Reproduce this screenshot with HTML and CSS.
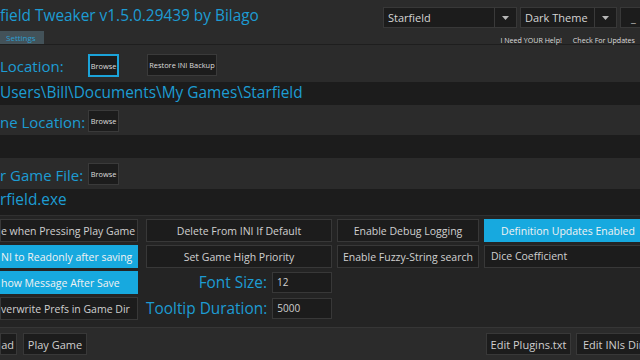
FILE: index.html
```html
<!DOCTYPE html>
<html lang="en">
<head>
  <meta charset="UTF-8" />
  <title>Starfield Tweaker</title>
  <link rel="stylesheet" href="styles.css">
</head>
<body>

<div class="window">
  <header class="topbar">
    <div class="title-area">
      <h1 class="title">field Tweaker v1.5.0.29439 by Bilago</h1>
      <div class="tabs"><span class="tab active">Settings</span></div>
    </div>
    <div class="top-right">
      <div class="combos">
        <div class="combo combo-game">
          <span class="value">Starfield</span>
          <span class="drop"><svg width="7" height="4" viewBox="0 0 7 4"><path d="M0 0h7L3.5 4z" fill="#b8b8b8"/></svg></span>
        </div>
        <div class="combo combo-theme">
          <span class="value">Dark Theme</span>
          <span class="drop"><svg width="7" height="4" viewBox="0 0 7 4"><path d="M0 0h7L3.5 4z" fill="#b8b8b8"/></svg></span>
        </div>
        <button class="min-btn">_</button>
      </div>
      <div class="links">
        <span>I Need YOUR Help!</span>
        <span>Check For Updates</span>
      </div>
    </div>
  </header>

  <div class="field-row row-ini">
    <span class="label">Location:</span>
    <button class="btn btn-browse focused">Browse</button>
    <button class="btn btn-restore">Restore INI Backup</button>
  </div>
  <div class="path path-ini">Users\Bill\Documents\My Games\Starfield</div>

  <div class="field-row row-game">
    <span class="label">ne Location:</span>
    <button class="btn btn-browse">Browse</button>
  </div>
  <div class="path path-game"></div>

  <div class="field-row row-exe">
    <span class="label">r Game File:</span>
    <button class="btn btn-browse">Browse</button>
  </div>
  <div class="path path-exe">rfield.exe</div>

  <div class="options">
    <button class="opt c1 cut">e when Pressing Play Game</button>
    <button class="opt">Delete From INI If Default</button>
    <button class="opt">Enable Debug Logging</button>
    <button class="opt on">Definition Updates Enabled</button>

    <button class="opt c1 cut on">NI to Readonly after saving</button>
    <button class="opt">Set Game High Priority</button>
    <button class="opt">Enable Fuzzy-String search</button>
    <div class="select">Dice Coefficient</div>

    <button class="opt c1 cut on">how Message After Save</button>
    <div class="setting">
      <span class="setting-label">Font Size:</span>
      <div class="input">12</div>
    </div>
    <div></div>
    <div></div>

    <button class="opt c1 cut">verwrite Prefs in Game Dir</button>
    <div class="setting">
      <span class="setting-label">Tooltip Duration:</span>
      <div class="input">5000</div>
    </div>
  </div>

  <footer class="bottombar">
    <div class="group">
      <button class="btn-bottom btn-load">ad</button>
      <button class="btn-bottom btn-play">Play Game</button>
    </div>
    <div class="group">
      <button class="btn-bottom btn-plugins">Edit Plugins.txt</button>
      <button class="btn-bottom btn-inis">Edit INIs Dir</button>
    </div>
  </footer>
</div>

</body>
</html>
```

FILE: styles.css
```css
* {
  box-sizing: border-box;
}

body {
  margin: 0;
  background: #2b2b2b;
  font-family: "Open Sans", "Noto Sans", Arial, sans-serif;
  overflow: hidden;
}

button {
  font-family: inherit;
  cursor: pointer;
}

.window {
  width: 652px;
  height: 360px;
  display: flex;
  flex-direction: column;
}

/* header */
.topbar {
  height: 45px;
  flex-shrink: 0;
  display: flex;
  justify-content: space-between;
  border-bottom: 1px solid #1e1e1e;
}

.title-area {
  display: flex;
  flex-direction: column;
  justify-content: space-between;
}

.title {
  margin: 0;
  padding-top: 6px;
  font-size: 15.4px;
  font-weight: normal;
  line-height: 20px;
  color: #1d9cd3;
  white-space: nowrap;
}

.tabs {
  display: flex;
}

.tab {
  width: 44px;
  height: 13px;
  line-height: 13px;
  padding-left: 6px;
  font-size: 8px;
  color: #2d9fd0;
  background: #435259;
}

.top-right {
  padding-top: 7px;
  display: flex;
  flex-direction: column;
  align-items: flex-end;
}

.combos {
  display: flex;
  gap: 3px;
}

.combo {
  height: 21px;
  background: #1c1c1c;
  border: 1px solid #383838;
  display: flex;
  align-items: center;
  color: #d4d4d4;
  font-size: 11px;
}
.combo .value {
  flex: 1;
  padding-left: 4px;
}
.combo .drop {
  width: 22px;
  height: 100%;
  border-left: 1px solid #3a3a3a;
  display: flex;
  align-items: center;
  justify-content: center;
}

.combo-game { width: 134px; }
.combo-theme { width: 97px; }

.min-btn {
  width: 32px;
  height: 21px;
  padding: 0 0 0 10px;
  text-align: left;
  background: #1c1c1c;
  border: 1px solid #383838;
  color: #bbb;
  font-size: 11px;
}

.links {
  margin-top: 7px;
  padding-right: 17px;
  display: flex;
  gap: 11px;
  font-size: 7.1px;
  line-height: 10px;
  color: #dcdcdc;
}

/* location rows */
.field-row {
  display: flex;
  align-items: flex-start;
  flex-shrink: 0;
}

.row-ini { height: 37px; padding-top: 9px; }
.row-game { height: 30px; padding-top: 5px; }
.row-exe { height: 31px; padding-top: 5px; }

.label {
  width: 88px;
  margin-top: 2px;
  font-size: 15px;
  line-height: 20px;
  color: #1d9cd3;
  white-space: nowrap;
}

.btn {
  height: 22px;
  padding: 0;
  background: #1c1c1c;
  border: 1px solid #3a3a3a;
  color: #dedede;
  font-size: 7.4px;
  white-space: nowrap;
}

.btn-browse { width: 31px; }

.focused {
  height: 23px;
  border: 2px solid #1ba3d9;
}

.btn-restore {
  width: 70px;
  margin-left: 28px;
}

.path {
  flex-shrink: 0;
  height: 23px;
  line-height: 22px;
  background: #1c1c1c;
  font-size: 15.4px;
  color: #1d9cd3;
  white-space: nowrap;
}

.path-exe { height: 26px; }

/* option grid */
.options {
  flex-shrink: 0;
  height: 112px;
  padding-top: 3px;
  background: #242424;
  border-top: 1px solid #303030;
  display: grid;
  grid-template-columns: 141px 186px 142px 1fr;
  grid-template-rows: repeat(4, 23px);
  column-gap: 5px;
  row-gap: 3px;
}

.opt {
  padding: 0;
  background: #1c1c1c;
  border: 1px solid #383838;
  color: #d0d0d0;
  font-size: 10.5px;
  white-space: nowrap;
  overflow: hidden;
}

.opt.on {
  background: #17a9df;
  border-color: #17a9df;
  color: #f2f2f2;
}

.c1 {
  margin-right: 3px;
}

.cut {
  text-align: left;
}

.select {
  padding-left: 6px;
  background: #1c1c1c;
  border: 1px solid #383838;
  color: #d0d0d0;
  font-size: 10.5px;
  line-height: 21px;
}

.setting {
  display: flex;
  justify-content: flex-end;
  align-items: center;
  gap: 5px;
}

.setting-label {
  font-size: 15.4px;
  color: #1d9cd3;
  white-space: nowrap;
}

.input {
  width: 60px;
  height: 21px;
  padding-left: 4px;
  background: #1c1c1c;
  border: 1px solid #383838;
  color: #d0d0d0;
  font-size: 10px;
  line-height: 19px;
}

/* bottom */
.bottombar {
  flex: 1;
  padding-top: 5px;
  border-top: 1px solid #363636;
  display: flex;
  justify-content: space-between;
  align-items: flex-start;
}

.group {
  display: flex;
  gap: 5px;
}

.btn-bottom {
  height: 22px;
  padding: 0;
  background: #1c1c1c;
  border: 1px solid #383838;
  color: #cfcfcf;
  font-size: 11px;
}

.btn-load { width: 17px; text-align: right; padding-right: 2px; }
.btn-play { width: 64px; margin-left: 1px; }
.btn-plugins { width: 85px; }
.btn-inis { width: 76px; text-align: left; padding-left: 6px; }
```
